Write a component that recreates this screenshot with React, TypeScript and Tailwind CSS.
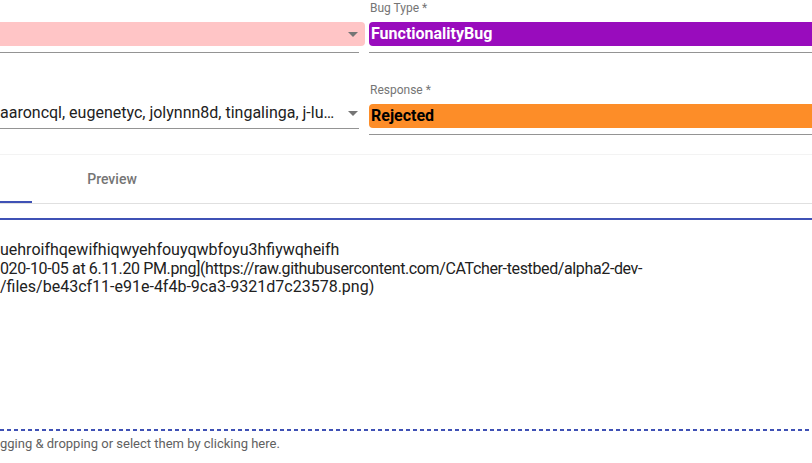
import React from 'react';

const Arrow = () => (
  <svg width="10" height="5" viewBox="0 0 10 5" className="shrink-0">
    <path d="M0 0 L10 0 L5 5 Z" fill="#757575" />
  </svg>
);

const Underline = ({ className = '' }: { className?: string }) => (
  <div className={`h-px bg-[#949494] ${className}`} />
);

export default function App() {
  return (
    <div
      className="w-[812px] h-[463px] overflow-hidden bg-white text-black"
      style={{ fontFamily: 'Roboto, "Liberation Sans", sans-serif' }}
    >
      {/* form fields */}
      <div className="flex gap-[4px]">
        <div className="w-[365px] shrink-0 flex flex-col pt-[22px]">
          <div className="h-[24px] bg-[#ffc5c6] rounded-r-[4px] flex items-center justify-end pr-[7px]">
            <Arrow />
          </div>
          <Underline className="mt-[6px] w-[359px]" />
          <div className="mt-[51px] h-[18px] w-[359px] flex items-center justify-between pr-[1px]">
            <span className="text-[16px] leading-[18px] text-[#212121] whitespace-nowrap">
              aaroncql, eugenetyc, jolynnn8d, tingalinga, j-lu…
            </span>
            <Arrow />
          </div>
          <Underline className="mt-[6px] w-[359px]" />
        </div>

        <div className="flex-1 flex flex-col pt-[1px]">
          <div className="h-[14px] text-[12px] leading-[14px] text-[#757575] pl-[1px]">Bug Type *</div>
          <div className="mt-[7px] h-[24px] bg-[#990cbd] rounded-l-[4px] flex items-center pl-[2px]">
            <span className="text-[16px] font-bold text-white">FunctionalityBug</span>
          </div>
          <Underline className="mt-[6px]" />
          <div className="mt-[30px] h-[14px] text-[12px] leading-[14px] text-[#757575] pl-[1px]">Response *</div>
          <div className="mt-[7px] h-[24px] bg-[#fd8d28] rounded-l-[4px] flex items-center pl-[2px]">
            <span className="text-[16px] font-bold text-black">Rejected</span>
          </div>
          <Underline className="mt-[6px]" />
        </div>
      </div>

      <div className="mt-[19px] h-px bg-[#f3f3f3]" />

      {/* tabs */}
      <div className="h-[49px] flex border-b border-[#e0e0e0]">
        <div className="w-[32px] flex flex-col justify-end">
          <div className="h-[2px] bg-[#3f51b5]" />
        </div>
        <div className="w-[160px] flex items-center justify-center text-[14px] font-medium text-[#757575]">
          Preview
        </div>
      </div>

      <div className="mt-[14px] h-[2px] bg-[#3f51b5]" />

      {/* textarea content */}
      <div className="mt-[21px] text-[16px] leading-[18.5px] text-[#212121] whitespace-nowrap">
        <div>uehroifhqewifhiqwyehfouyqwbfoyu3hfiywqheifh</div>
        <div className="tracking-[-0.37px]">
          020-10-05 at 6.11.20 PM.png](https://raw.githubusercontent.com/CATcher-testbed/alpha2-dev-
        </div>
        <div>/files/be43cf11-e91e-4f4b-9ca3-9321d7c23578.png)</div>
      </div>

      <div className="mt-[132px] h-[2px] bg-[repeating-linear-gradient(90deg,#3f51b5_0_4px,transparent_4px_7px)]" />

      <div className="mt-[5px] text-[13px] leading-[15px] text-[#616161] whitespace-nowrap">
        gging &amp; dropping or select them by clicking here.
      </div>
    </div>
  );
}
